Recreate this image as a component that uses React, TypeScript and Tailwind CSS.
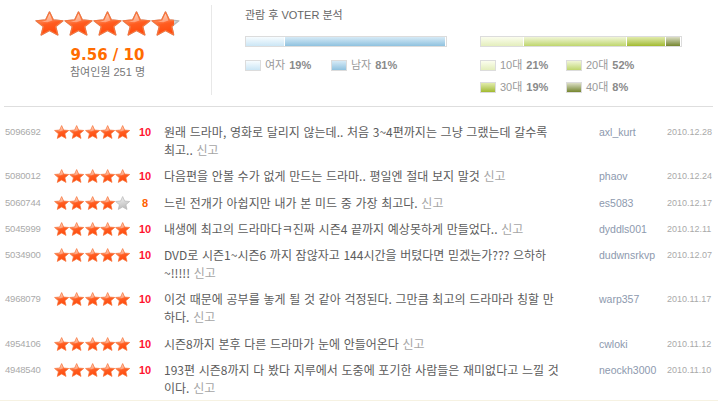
import React from "react";

const STAR_POINTS =
  "47.55,0 61.07,31.39 95.1,34.55 69.42,57.11 76.94,90.45 47.55,73 18.16,90.45 25.68,57.11 0,34.55 34.03,31.39";

function Star({ w, h, grey }: { w: number; h: number; grey?: boolean }) {
  return (
    <svg
      width={w}
      height={h}
      viewBox="-4 -4 103.1 98.45"
      preserveAspectRatio="none"
      className="block shrink-0"
    >
      <polygon
        points={STAR_POINTS}
        fill={grey ? "url(#starGrey)" : "url(#starOrange)"}
        stroke={grey ? "#b8b8b8" : "#f7743c"}
        strokeWidth={5}
        strokeLinejoin="round"
      />
      {!grey && (
        <polygon
          points="47.55,6 58,33 40,40 20,38 36,33"
          fill="#ffffff"
          opacity={0.35}
        />
      )}
    </svg>
  );
}

function BigStars() {
  return (
    <div className="relative w-[145px] h-[25px]">
      <div className="flex">
        {[0, 1, 2, 3, 4].map((i) => (
          <Star key={i} w={29} h={25} grey />
        ))}
      </div>
      <div className="absolute left-0 top-0 h-[25px] w-[95.6%] overflow-hidden">
        <div className="flex w-[145px]">
          {[0, 1, 2, 3, 4].map((i) => (
            <Star key={i} w={29} h={25} />
          ))}
        </div>
      </div>
    </div>
  );
}

function SmallStars({ n }: { n: number }) {
  return (
    <div className="flex">
      {[0, 1, 2, 3, 4].map((i) => (
        <Star key={i} w={15.3} h={14} grey={i >= n} />
      ))}
    </div>
  );
}

type Row = {
  id: string;
  stars: number;
  score: string;
  lines: string[];
  user: string;
  date: string;
};

const rows: Row[] = [
  {
    id: "5096692",
    stars: 5,
    score: "10",
    lines: [
      "원래 드라마, 영화로 달리지 않는데.. 처음 3~4편까지는 그냥 그랬는데 갈수록",
      "최고..",
    ],
    user: "axl_kurt",
    date: "2010.12.28",
  },
  {
    id: "5080012",
    stars: 5,
    score: "10",
    lines: ["다음편을 안볼 수가 없게 만드는 드라마.. 평일엔 절대 보지 말것"],
    user: "phaov",
    date: "2010.12.24",
  },
  {
    id: "5060744",
    stars: 4,
    score: "8",
    lines: ["느린 전개가 아쉽지만 내가 본 미드 중 가장 최고다."],
    user: "es5083",
    date: "2010.12.17",
  },
  {
    id: "5045999",
    stars: 5,
    score: "10",
    lines: ["내생에 최고의 드라마다ㅋ진짜 시즌4 끝까지 예상못하게 만들었다.."],
    user: "dyddls001",
    date: "2010.12.11",
  },
  {
    id: "5034900",
    stars: 5,
    score: "10",
    lines: [
      "DVD로 시즌1~시즌6 까지 잠않자고 144시간을 버텼다면 믿겠는가??? 으하하",
      "~!!!!!",
    ],
    user: "dudwnsrkvp",
    date: "2010.12.07",
  },
  {
    id: "4968079",
    stars: 5,
    score: "10",
    lines: [
      "이것 때문에 공부를 놓게 될 것 같아 걱정된다. 그만큼 최고의 드라마라 칭할 만",
      "하다.",
    ],
    user: "warp357",
    date: "2010.11.17",
  },
  {
    id: "4954106",
    stars: 5,
    score: "10",
    lines: ["시즌8까지 본후 다른 드라마가 눈에 안들어온다"],
    user: "cwloki",
    date: "2010.11.12",
  },
  {
    id: "4948540",
    stars: 5,
    score: "10",
    lines: [
      "193편 시즌8까지 다 봤다 지루에서 도중에 포기한 사람들은 재미없다고 느낄 것",
      "이다.",
    ],
    user: "neockh3000",
    date: "2010.11.10",
  },
];

function Legend({
  swatch,
  label,
  pct,
}: {
  swatch: string;
  label: string;
  pct: string;
}) {
  return (
    <div className="flex items-center w-[86px] h-[11px]">
      <div className={`w-[16px] h-[11px] border border-[#dcdcdc] ${swatch}`} />
      <span className="ml-[4px] text-[11px] leading-[11px] text-[#999]">
        {label}
      </span>
      <span className="ml-[4px] text-[11px] leading-[11px] font-bold text-[#8a8a8a]">
        {pct}
      </span>
    </div>
  );
}

const FEMALE = "bg-linear-to-b from-[#f7fcff] to-[#cbe6f5]";
const MALE = "bg-linear-to-b from-[#d6eaf6] to-[#8fc2df]";
const A10 = "bg-linear-to-b from-[#fbfdee] to-[#e4eebc]";
const A20 = "bg-linear-to-b from-[#f1f6d6] to-[#bfd66c]";
const A30 = "bg-linear-to-b from-[#e2ecaa] to-[#a2ba2a]";
const A40 = "bg-linear-to-b from-[#dcdec4] to-[#76862c]";

export default function App() {
  return (
    <div className="w-[718px] h-[401px] bg-white overflow-hidden flex flex-col font-['Liberation_Sans','Noto_Sans_CJK_KR',sans-serif]">
      <svg width="0" height="0" className="absolute">
        <defs>
          <linearGradient id="starOrange" x1="0" y1="0" x2="0.25" y2="1">
            <stop offset="0" stopColor="#ffdccb" />
            <stop offset="0.32" stopColor="#ff9566" />
            <stop offset="0.6" stopColor="#ff5c20" />
            <stop offset="1" stopColor="#ff4a0c" />
          </linearGradient>
          <linearGradient id="starGrey" x1="0" y1="0" x2="0.25" y2="1">
            <stop offset="0" stopColor="#f6f6f6" />
            <stop offset="1" stopColor="#bdbdbd" />
          </linearGradient>
        </defs>
      </svg>

      {/* top summary */}
      <div className="flex pl-[4px] pt-[5px] h-[106px] shrink-0">
        <div className="w-[208px] h-[90px] border-r border-[#e8e8e8] flex flex-col items-center pt-[6px]">
          <BigStars />
          <div className="mt-[10px] text-[15px] leading-[18px] font-bold text-[#ff6c00] font-['DejaVu_Sans',sans-serif]">
            9.56 / 10
          </div>
          <div className="text-[11px] leading-[16px] text-[#777]">
            참여인원 251 명
          </div>
        </div>

        <div className="ml-[33px] w-[202px] pt-[3px]">
          <div className="text-[11px] leading-[14px] text-[#666]">
            관람 후 VOTER 분석
          </div>
          <div className="mt-[14px] h-[11px] border border-[#dcdcdc] flex">
            <div className={`w-[38px] h-full ${FEMALE}`} />
            <div className={`w-[161px] h-full border-l border-white ${MALE}`} />
          </div>
          <div className="mt-[13px] flex">
            <Legend swatch={FEMALE} label="여자" pct="19%" />
            <Legend swatch={MALE} label="남자" pct="81%" />
          </div>
        </div>

        <div className="ml-[33px] w-[202px] pt-[31px]">
          <div className="h-[11px] border border-[#dcdcdc] flex">
            <div className={`w-[42px] h-full ${A10}`} />
            <div className={`w-[103px] h-full border-l border-white ${A20}`} />
            <div className={`w-[39px] h-full border-l border-white ${A30}`} />
            <div className={`w-[15px] h-full border-l border-white ${A40}`} />
          </div>
          <div className="mt-[13px] flex flex-col gap-[11px]">
            <div className="flex">
              <Legend swatch={A10} label="10대" pct="21%" />
              <Legend swatch={A20} label="20대" pct="52%" />
            </div>
            <div className="flex">
              <Legend swatch={A30} label="30대" pct="19%" />
              <Legend swatch={A40} label="40대" pct="8%" />
            </div>
          </div>
        </div>
      </div>

      <div className="ml-[4px] mr-[5px] border-t border-[#dedede]" />

      {/* list */}
      <div className="pt-[11px] flex flex-col">
        {rows.map((r) => (
          <div key={r.id} className="flex items-start pl-[5px] pt-[5px] pb-[3.3px]">
            <div className="w-[49px] text-[9.5px] leading-[18px] text-[#aaaaaa] tracking-[-0.2px]">
              {r.id}
            </div>
            <div className="w-[81px] h-[18px] flex items-center">
              <SmallStars n={r.stars} />
            </div>
            <div
              className={`w-[20px] text-center text-[11px] leading-[18px] font-bold ${
                r.score === "10" ? "text-[#ff1430]" : "text-[#ff6000]"
              }`}
            >
              {r.score}
            </div>
            <div className="ml-[9px] w-[435px] text-[12px] leading-[18px] text-[#5c5c5c] whitespace-nowrap font-['Noto_Sans_CJK_KR',sans-serif] [word-spacing:1px]">
              {r.lines.map((l, i) => (
                <div key={i}>
                  {l}
                  {i === r.lines.length - 1 && (
                    <>
                      {" "}
                      <span className="text-[#a5a5a5]">신고</span>
                    </>
                  )}
                </div>
              ))}
            </div>
            <div className="w-[68px] text-[10.5px] leading-[18px] text-[#8d99ae]">
              {r.user}
            </div>
            <div className="text-[9px] leading-[18px] text-[#aaaaaa]">
              {r.date}
            </div>
          </div>
        ))}
      </div>

      <div className="mt-auto h-[2px] bg-[#f6f2e2] shrink-0" />
    </div>
  );
}
